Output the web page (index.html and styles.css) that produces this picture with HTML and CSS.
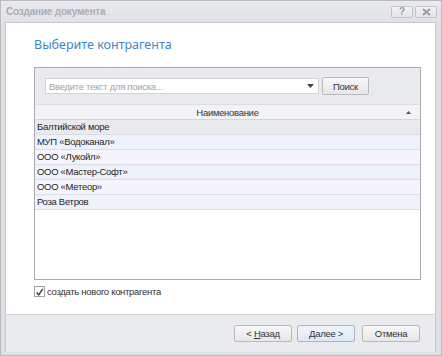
FILE: index.html
```html
<!DOCTYPE html>
<html lang="ru">
<head>
    <meta charset="UTF-8">
    <meta name="viewport" content="width=device-width, initial-scale=1.0">
    <link rel="stylesheet" href="styles.css">
    <title>Создание документа</title>
</head>
<body>
    <div class="window">
        <div class="titlebar">
            <span class="title">Создание документа</span>
            <div class="title-buttons">
                <span class="title-btn">?</span>
                <span class="title-btn">
                    <svg width="9" height="8" viewBox="0 0 9 8"><path d="M1 1 L8 7 M8 1 L1 7" stroke="#9a9ca0" stroke-width="2"/></svg>
                </span>
            </div>
        </div>
        <div class="client">
            <div class="page">
                <h1 class="heading">Выберите контрагента</h1>
                <div class="grid">
                    <div class="toolbar">
                        <div class="search">
                            <span class="placeholder">Введите текст для поиска...</span>
                            <svg class="caret" width="7" height="4" viewBox="0 0 7 4"><path d="M0 0 H7 L3.5 4 Z" fill="#444"/></svg>
                        </div>
                        <span class="btn search-btn">Поиск</span>
                    </div>
                    <div class="header">
                        <span>Наименование</span>
                        <svg class="sort" width="5" height="3" viewBox="0 0 5 3"><path d="M0 3 H5 L2.5 0 Z" fill="#555"/></svg>
                    </div>
                    <div class="row row-focus">Балтийской море</div>
                    <div class="row row-even">МУП «Водоканал»</div>
                    <div class="row row-odd">ООО «Лукойл»</div>
                    <div class="row row-even">ООО «Мастер-Софт»</div>
                    <div class="row row-odd">ООО «Метеор»</div>
                    <div class="row row-even">Роза Ветров</div>
                </div>
                <div class="check">
                    <span class="box">
                        <svg width="11" height="11" viewBox="0 0 11 11"><path d="M2 5.5 L4.5 8.5 L9.5 1" stroke="#333" stroke-width="1.6" fill="none"/></svg>
                    </span>
                    <span>создать нового контрагента</span>
                </div>
            </div>
            <div class="footer">
                <span class="btn nav-btn">&lt;&nbsp;<u>Н</u>азад</span>
                <span class="btn nav-btn default"><u>Д</u>алее&nbsp;&gt;</span>
                <span class="btn nav-btn cancel">Отмена</span>
            </div>
        </div>
    </div>
</body>
</html>
```

FILE: styles.css
```css
* {
    margin: 0;
    padding: 0;
    box-sizing: border-box;
}

body {
    background: #fff;
    font-family: "Liberation Sans", Arial, sans-serif;
    font-size: 9.5px;
    letter-spacing: -0.3px;
    color: #1e1e1e;
}

.window {
    width: 442px;
    height: 356px;
    display: flex;
    flex-direction: column;
    background: #dfe0e4;
    border: 1px solid #b9bbc0;
}

.titlebar {
    height: 21px;
    display: flex;
    align-items: center;
    justify-content: space-between;
    padding: 0 4px 0 5px;
    background: linear-gradient(#e9eaee, #e1e2e6);
}

.title {
    font-weight: bold;
    font-size: 10px;
    letter-spacing: -0.2px;
    color: #abadb1;
}

.title-buttons {
    display: flex;
    gap: 2px;
}

.title-btn {
    width: 22px;
    height: 12px;
    display: flex;
    align-items: center;
    justify-content: center;
    border: 1px solid #c2c4c8;
    border-radius: 2px;
    background: linear-gradient(#f3f3f5, #e2e3e6);
    font-weight: bold;
    font-size: 10px;
    color: #9a9ca0;
}

.client {
    flex: 1;
    display: flex;
    flex-direction: column;
    margin: 0 5px 3px 4px;
    border: 1px solid #c8cacf;
    border-bottom: none;
}

.page {
    flex: 1;
    background: #fff;
    padding: 13px 14px 0 28px;
}

.heading {
    font-family: "Noto Sans", sans-serif;
    font-weight: normal;
    font-size: 12.5px;
    letter-spacing: 0;
    line-height: 18px;
    color: #3f86c8;
    margin-bottom: 13px;
}

.grid {
    height: 213px;
    border: 1px solid #a9abaf;
    background: #fff;
}

.toolbar {
    height: 36px;
    display: flex;
    align-items: center;
    padding-left: 10px;
    gap: 3px;
    background: #e9eaed;
}

.search {
    width: 274px;
    height: 16px;
    display: flex;
    align-items: center;
    justify-content: space-between;
    padding: 0 4px 0 3px;
    background: #fff;
    border: 1px solid #d2d4d8;
}

.placeholder {
    color: #a3a5a8;
}

.btn {
    display: flex;
    align-items: center;
    justify-content: center;
    border: 1px solid #b7b9bd;
    border-radius: 2px;
    background: linear-gradient(#f7f7f8, #e6e7ea);
    color: #333;
}

.search-btn {
    width: 47px;
    height: 18px;
}

.header {
    height: 16px;
    display: flex;
    align-items: center;
    justify-content: center;
    position: relative;
    background: #f3f3f5;
    border-top: 1px solid #dcdde1;
    border-bottom: 1px solid #d6d7db;
    color: #333;
}

.sort {
    position: absolute;
    right: 9px;
    top: 6px;
}

.row {
    height: 15px;
    line-height: 14px;
    padding-left: 2px;
    border-bottom: 1px solid #dcdde2;
}

.row-focus {
    background: #e9eaee;
}

.row-even {
    background: #eef3fb;
}

.row-odd {
    background: #f5f3fc;
}

.check {
    display: flex;
    align-items: center;
    gap: 2px;
    margin-top: 6px;
    color: #333;
}

.box {
    width: 11px;
    height: 11px;
    display: flex;
    border: 1px solid #9fa1a5;
    background: #fff;
}

.footer {
    height: 38px;
    display: flex;
    align-items: center;
    justify-content: flex-end;
    padding: 0 15px 0 0;
    gap: 5px;
    background: #eaebef;
    border-top: 1px solid #d2d3d8;
}

.nav-btn {
    width: 58px;
    height: 17px;
}

.default {
    background: linear-gradient(#eef4fd, #dde8f7);
    border-color: #a8b6cc;
}

.cancel {
    margin-left: 2px;
}
```
